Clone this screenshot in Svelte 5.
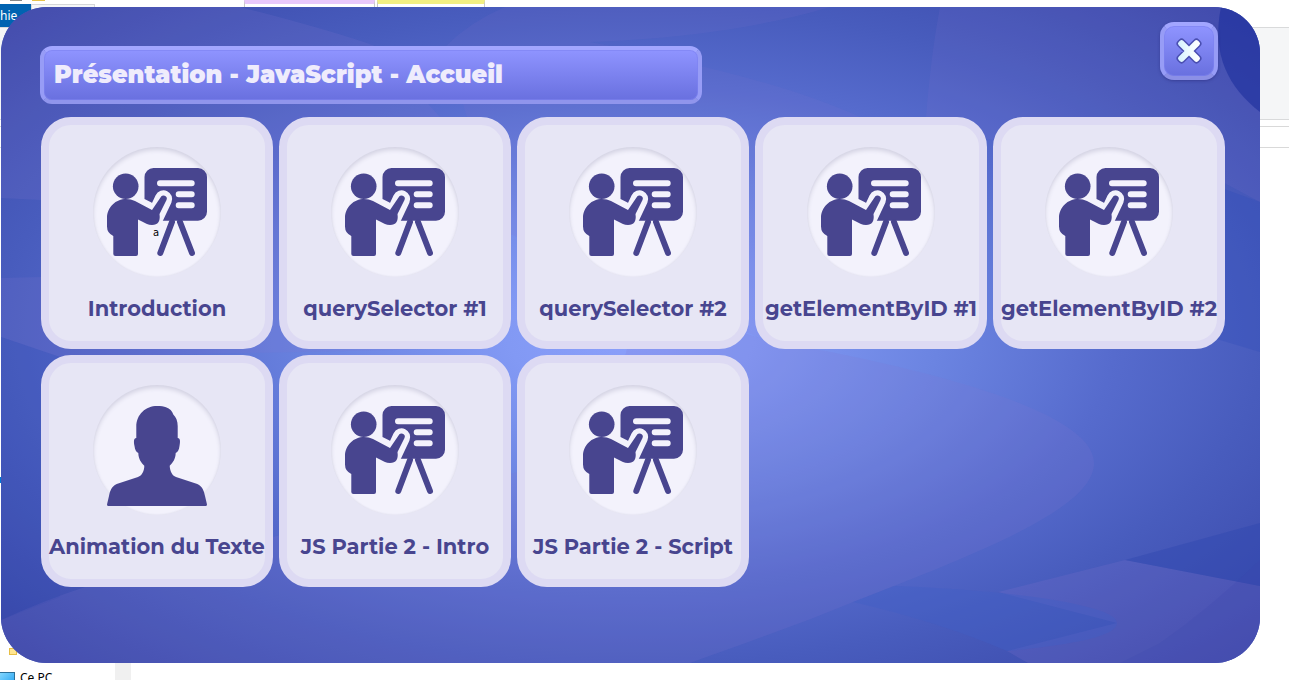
<script>
  const title = 'Présentation - JavaScript - Accueil';

  const cards = [
    { label: 'Introduction', icon: 'board', hint: 'a' },
    { label: 'querySelector #1', icon: 'board' },
    { label: 'querySelector #2', icon: 'board' },
    { label: 'getElementByID #1', icon: 'board' },
    { label: 'getElementByID #2', icon: 'board' },
    { label: 'Animation du Texte', icon: 'person' },
    { label: 'JS Partie 2 - Intro', icon: 'board' },
    { label: 'JS Partie 2 - Script', icon: 'board' }
  ];
</script>

<!-- Windows left open on the desktop, behind the launcher -->
<div class="desktop">
  <i class="chip grey"></i>
  <i class="chip gold"></i>
  <i class="tab-edge"></i>
  <i class="tab lilac"></i>
  <i class="tab yellow"></i>
  <i class="ribbon"></i>
  <span class="file-tab">hie</span>
  <i class="address"></i>
  <i class="tick"></i>
  <i class="folder"></i>
  <i class="scroll"></i>
  <i class="pc-icon"></i>
  <span class="pc">Ce PC</span>
</div>

<main class="panel">
  <svg class="waves" viewBox="1 7 1259 656" preserveAspectRatio="none" aria-hidden="true">
    <defs>
      <radialGradient id="glow" cx="50%" cy="50%" r="70%">
        <stop offset="0" stop-color="#8ca0fb" />
        <stop offset="0.14" stop-color="#8299f4" />
        <stop offset="0.35" stop-color="#6b84e1" />
        <stop offset="0.55" stop-color="#566bcd" />
        <stop offset="0.72" stop-color="#485cbd" />
        <stop offset="1" stop-color="#3845a6" />
      </radialGradient>
    </defs>
    <rect x="1" y="7" width="1259" height="656" fill="url(#glow)" />
    <g fill="#8074cf" fill-opacity="0.17">
      <path d="M1 7H240Q330 30 375 46L440 117V349L60 357L1 337V278L41 277V200L1 198Z" />
      <path d="M1 620Q45 600 85 587L600 450L640 300L760 338Q780 344 820 350C950 375 1094 415 1094 463C1094 505 1000 545 853 602C800 624 740 645 690 663H1Z" />
      <path d="M998 592L1125 560L1260 586V663H1028L1007 651L1117 623Z" fill-opacity="0.22" />
      <path d="M446 46Q470 22 505 7H830Q730 37 590 42C690 62 790 85 860 117L940 200L760 338L500 230Z" fill-opacity="0.12" />
      <path d="M940 7H1260V202L1200 170L925 130Q930 60 940 7Z" fill-opacity="0.14" />
    </g>
    <path d="M894 586C990 589 1117 603 1117 623C1117 638 1060 646 1007 651Q940 622 853 602Z" fill="#4160c6" fill-opacity="0.4" />
    <path d="M1125 560L1260 523V586Z" fill="#2e47b0" fill-opacity="0.4" />
    <path d="M1260 560Q1210 608 1160 643L1120 663H1260Z" fill="#3d45ae" fill-opacity="0.2" />
    <path d="M1221 7C1211 55 1229 88 1260 112V7Z" fill="#1c2f9c" fill-opacity="0.6" />
    <path d="M1200 180L1260 202V352L1200 334Z" fill="#304bb8" fill-opacity="0.3" />
    <path d="M1 337L60 357V597L1 620Z" fill="#3048b2" fill-opacity="0.15" />
  </svg>

  <header>
    <h1>{title}</h1>
    <button class="close" type="button" aria-label="Fermer">
      <svg viewBox="-16 -16 32 32" aria-hidden="true">
        <defs>
          <linearGradient id="ice" x1="0" y1="0.5" x2="1" y2="0.5">
            <stop offset="0" stop-color="#d4f1ff" />
            <stop offset="0.6" stop-color="#f3fdff" />
            <stop offset="1" stop-color="#ffffff" />
          </linearGradient>
          <path id="cross" d="M0 -4.500L5.800 -10.300Q7.400 -11.900 9 -10.300L10.300 -9Q11.900 -7.400 10.300 -5.800L4.500 0L10.300 5.800Q11.900 7.400 10.300 9L9 10.300Q7.400 11.900 5.800 10.300L0 4.500L-5.800 10.300Q-7.400 11.900 -9 10.300L-10.300 9Q-11.900 7.400 -10.300 5.800L-4.500 0L-10.300 -5.800Q-11.900 -7.400 -10.300 -9L-9 -10.300Q-7.400 -11.900 -5.800 -10.300Z" />
        </defs>
        <use href="#cross" fill="#4a4fb1" stroke="#4a4fb1" stroke-width="3" stroke-linejoin="round" />
        <use href="#cross" fill="url(#ice)" />
      </svg>
    </button>
  </header>

  <section class="grid">
    {#each cards as card}
      <button class="card" type="button">
        <span class="disc">
          {#if card.icon === 'board'}
            <svg viewBox="0 0 100 100" aria-hidden="true">
              <path class="ink" d="M46.500 0H91A9 9 0 0 1 100 9V43.700A9 9 0 0 1 91 52.700H52L50 40L44.500 34.500L37.500 31V9A9 9 0 0 1 46.500 0Z" />
              <path class="paper" d="M56.500 31L48 49" stroke-width="17.400" />
              <path class="paper" d="M53 15.300H84.700M71.700 26.300H84.700M71.700 37.300H84.700" stroke-width="6" />
              <path class="leg" d="M65 54L53.300 85M73 54L85 85" stroke-width="6" />
              <circle class="ink" cx="18.700" cy="18.300" r="12.800" />
              <path class="ink" d="M19 31Q24 31 28 33L45 42L53.500 29.500A3.200 3.200 0 0 1 59.500 32L52.500 46Q54 57 45 57Q42 57 40 56L31 51.500V86Q31 88 29 88H8.500Q6.300 88 6.300 86V68Q0 65 0 58.500V50C0 39 9 31 19 31Z" />
            </svg>
          {:else}
            <svg viewBox="0 0 100 100" aria-hidden="true">
              <path class="ink" d="M50 0C54 0 57 .5 59 1.300C63 2.500 65 5 66.300 8.500C69 11 70.700 15 70.700 20V32C73.500 32 73.300 36 72.500 40C72 43.500 71 46 68.700 47C68.500 53 66 56.500 62.700 59.700C63 65 65 69.500 69 71L90.300 78C95.500 80.500 97 85 98 90L100 98.500Q100 100 98.500 100H1.500Q0 100 0 98.500L2 90C3 85 4.500 80.500 9.700 78L31 71C35 69.500 37.300 65 37.300 59.700C34 56.500 31.500 53 31.300 47C29 46 28 43.500 27.500 40C26.700 36 26.500 32 29.300 32V21C29.300 8 39 0 50 0Z" />
            </svg>
          {/if}
        </span>
        <span class="label">{card.label}</span>
        {#if card.hint}<span class="hint">{card.hint}</span>{/if}
      </button>
    {/each}
  </section>
</main>

<style>
  :global(body) {
    background: #fff;
    font-family: Montserrat, Inter, 'Open Sans', sans-serif;
  }

  .desktop {
    position: absolute;
    inset: 0;
    overflow: hidden;
    font: 12px/16px 'Noto Sans', 'Open Sans', sans-serif;
  }
  .desktop > * {
    position: absolute;
    box-sizing: border-box;
  }
  .chip { top: 0; height: 1px; width: 12px; }
  .grey { left: 10px; background: #888; }
  .gold { left: 32px; width: 13px; background: #e8c34a; }
  .file-tab {
    left: 0;
    top: 4px;
    width: 31px;
    height: 23px;
    line-height: 24px;
    background: #0063b1;
    color: #fff;
  }
  .tab-edge {
    left: 31px;
    top: 4px;
    width: 64px;
    height: 20px;
    border: 1px solid #d5d7d9;
    background: #f5f6f7;
  }
  .tab {
    top: 0;
    height: 27px;
    border: 1px solid #c8c8c8;
    border-top: 4px solid;
  }
  .lilac { left: 244px; width: 131px; border-top-color: #e9c9fb; }
  .yellow { left: 377px; width: 108px; border-top-color: #f2ef83; }
  .ribbon {
    left: 0;
    right: 0;
    top: 27px;
    height: 93px;
    background: #f5f6f7;
    border: solid #d9dadb;
    border-width: 1px 0;
  }
  .address {
    left: 0;
    right: 0;
    top: 126px;
    height: 22px;
    border: solid #d9d9d9;
    border-width: 1px 0;
  }
  .tick { left: 0; top: 477px; width: 2px; height: 6px; background: #0078d7; }
  .folder {
    left: 9px;
    top: 648px;
    width: 8px;
    height: 7px;
    background: #ffe591;
    border: 1px solid #e6be45;
  }
  .scroll { left: 115px; top: 640px; bottom: 0; width: 16px; background: #f0f0f0; }
  .pc-icon {
    left: -4px;
    top: 672px;
    width: 19px;
    height: 14px;
    border: 1px solid #2b7099;
    background: linear-gradient(135deg, #8cdcff, #27a4f2);
  }
  .pc { left: 20px; top: 670px; color: #000; }

  .panel {
    position: relative;
    overflow: hidden;
    box-sizing: border-box;
    margin: 7px 29px 17px 1px;
    padding: 15px 34px 76px 40px;
    border-radius: 46px;
    background: #4b60c2;
  }
  .waves {
    position: absolute;
    inset: 0;
    width: 100%;
    height: 100%;
  }

  header {
    position: relative;
    display: flex;
    justify-content: space-between;
    align-items: flex-start;
    gap: 24px;
    padding-right: 8px;
    margin: 0 0 13px -1px;
  }
  h1 {
    box-sizing: border-box;
    flex: 0 1 662px;
    margin: 24px 0 0;
    padding: 0 10px;
    border: 4px solid;
    border-color: #a2a6ff #979cf6 #9095ec;
    border-radius: 12px;
    background: linear-gradient(#8f94ff, #6970df);
    box-shadow: inset 0 0 0 1px rgb(125 130 240 / 60%);
    color: #efecfc;
    font-size: 24px;
    font-weight: 900;
    line-height: 50px;
  }
  .close {
    display: grid;
    place-items: center;
    flex: none;
    width: 58px;
    height: 58px;
    padding: 0;
    border: 4px solid;
    border-color: #a2a6ff #979cf6 #8c90e6;
    border-radius: 14px;
    background: linear-gradient(#8f94ff, #6970df);
    box-shadow: 0 1px 3px rgb(40 40 120 / 50%), inset 0 0 0 1px rgb(125 130 240 / 60%);
    cursor: pointer;
  }
  .close svg {
    width: 32px;
    height: 32px;
  }

  .grid {
    position: relative;
    display: grid;
    grid-template-columns: repeat(auto-fill, 232px);
    gap: 6px;
  }
  .card {
    position: relative;
    display: flex;
    flex-direction: column;
    align-items: center;
    gap: 18px;
    min-height: 232px;
    padding: 22px 0 18px;
    border: 8px solid #dddaf3;
    border-radius: 30px;
    background: #e7e6f5;
    color: #48458f;
    font: inherit;
    cursor: pointer;
  }
  .disc {
    box-sizing: border-box;
    width: 128px;
    height: 130px;
    padding: 21px 14px 9px;
    border-radius: 50%;
    background: #f3f2fc;
    box-shadow: inset 0 3px 4px #d5d4e4, inset 0 0 2px #d9d8e8;
  }
  .disc svg {
    display: block;
    width: 100px;
    height: 100px;
  }
  .ink { fill: #48458f; }
  .paper { fill: none; stroke: #f3f2fc; stroke-linecap: round; }
  .leg { fill: none; stroke: #48458f; stroke-linecap: round; }
  .label {
    font-size: 21px;
    font-weight: 700;
    line-height: 28px;
    white-space: nowrap;
  }
  .hint {
    position: absolute;
    left: 104px;
    top: 100px;
    color: #000;
    font: 10px/16px 'DejaVu Sans', sans-serif;
  }
</style>
